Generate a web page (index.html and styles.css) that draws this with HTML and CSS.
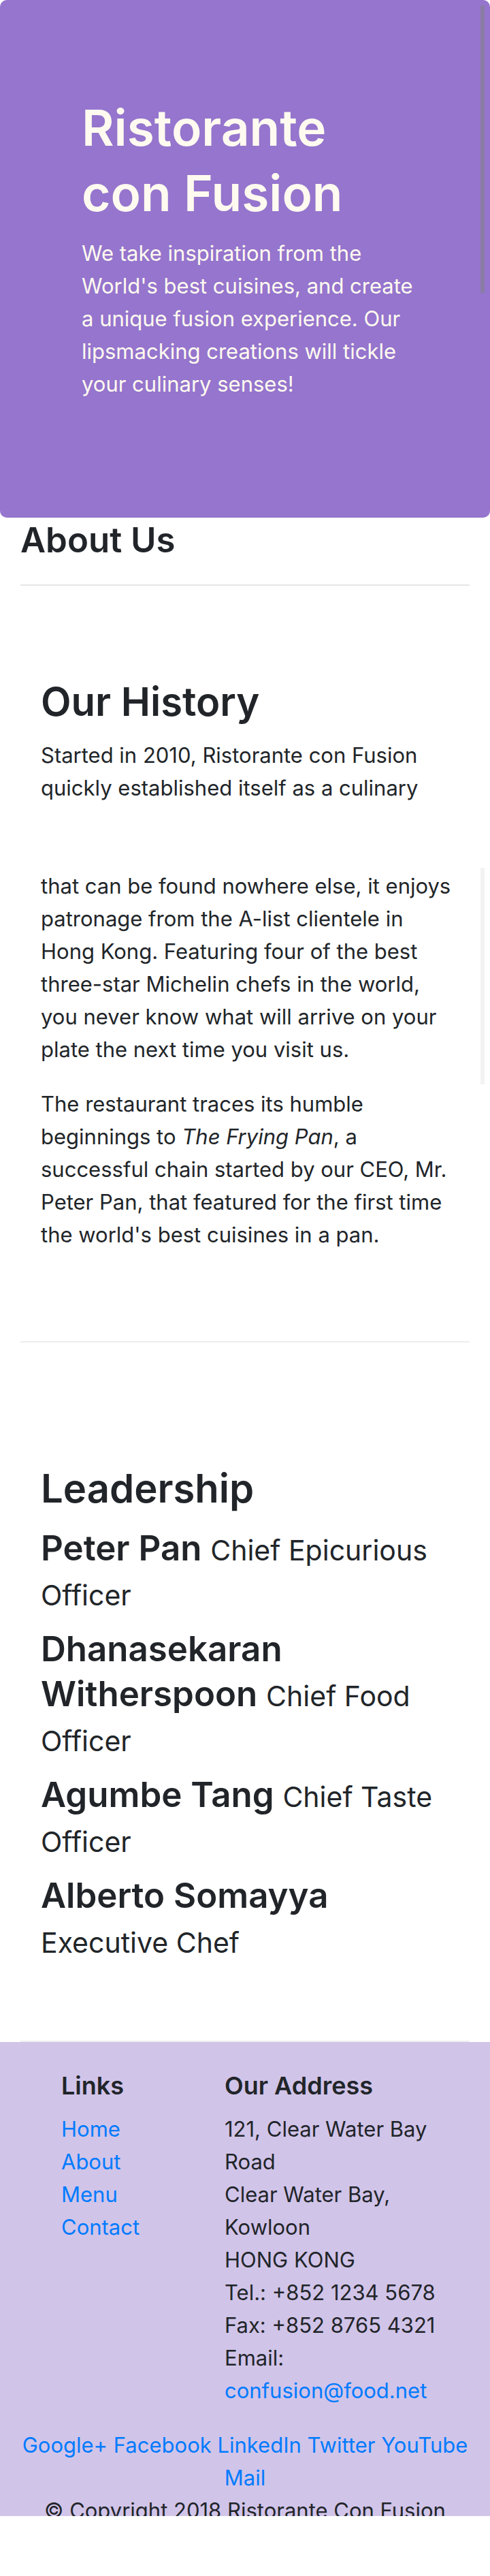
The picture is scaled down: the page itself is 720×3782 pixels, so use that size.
FILE: index.html
```html
<!DOCTYPE html>
<html lang="en">
<head>
<meta charset="utf-8">
<meta name="viewport" content="width=device-width, initial-scale=1">
<title>Ristorante Con Fusion: About Us</title>
<link rel="stylesheet" href="styles.css">
</head>
<body>
<header class="jumbotron">
  <h1>Ristorante con Fusion</h1>
  <p>We take inspiration from the World's best cuisines, and create a unique fusion experience. Our lipsmacking creations will tickle your culinary senses!</p>
  <div class="scroll-thumb" aria-hidden="true"></div>
</header>

<main class="container">
  <h3 class="page-title">About Us</h3>
  <hr class="rule">

  <section class="row-content history">
    <h2>Our History</h2>
    <p class="intro">Started in 2010, Ristorante con Fusion quickly established itself as a culinary</p>
    <p>that can be found nowhere else, it enjoys patronage from the A-list clientele in Hong Kong. Featuring four of the best three-star Michelin chefs in the world, you never know what will arrive on your plate the next time you visit us.</p>
    <p>The restaurant traces its humble beginnings to <em>The Frying Pan</em>, a successful chain started by our CEO, Mr. Peter Pan, that featured for the first time the world's best cuisines in a pan.</p>
    <div class="scroll-track" aria-hidden="true"></div>
  </section>

  <section class="row-content leadership">
    <h2>Leadership</h2>
    <h3>Peter Pan <small>Chief Epicurious Officer</small></h3>
    <h3>Dhanasekaran Witherspoon <small>Chief Food Officer</small></h3>
    <h3>Agumbe Tang <small>Chief Taste Officer</small></h3>
    <h3>Alberto Somayya <small>Executive Chef</small></h3>
  </section>
</main>

<footer class="footer">
  <div class="footer-columns">
    <nav class="footer-links">
      <h5>Links</h5>
      <ul>
        <li><a href="#">Home</a></li>
        <li><a href="#">About</a></li>
        <li><a href="#">Menu</a></li>
        <li><a href="#">Contact</a></li>
      </ul>
    </nav>
    <div class="footer-address">
      <h5>Our Address</h5>
      <address>
        121, Clear Water Bay Road<br>
        Clear Water Bay, Kowloon<br>
        HONG KONG<br>
        Tel.: +852 1234 5678<br>
        Fax: +852 8765 4321<br>
        Email: <a href="mailto:confusion@food.net">confusion@food.net</a>
      </address>
    </div>
  </div>
  <div class="social">
    <a href="#">Google+</a>
    <a href="#">Facebook</a>
    <a href="#">LinkedIn</a>
    <a href="#">Twitter</a>
    <a href="#">YouTube</a>
    <a href="#">Mail</a>
  </div>
  <p class="copyright">© Copyright 2018 Ristorante Con Fusion</p>
</footer>
</body>
</html>
```
FILE: styles.css
```css
* {
  box-sizing: border-box;
}

body {
  margin: 0;
  background: #fff;
  color: #212529;
  font-family: Inter, "Liberation Sans", sans-serif;
  font-size: 31px;
  line-height: 48px;
}

h1,
h2,
h3,
h5 {
  margin: 0 0 16px;
  font-weight: 600;
}

h1 {
  font-size: 73px;
  line-height: 96px;
}

h2 {
  font-size: 58px;
  line-height: 77px;
}

h3 {
  font-size: 51px;
  line-height: 66px;
}

h5 {
  font-size: 36px;
  line-height: 48px;
}

p {
  margin: 0 0 32px;
}

small {
  font-size: 41px;
  font-weight: 400;
  line-height: 1;
}

a {
  color: #007bff;
  text-decoration: none;
}

a:hover {
  text-decoration: underline;
}

.jumbotron {
  position: relative;
  padding: 140px 100px 140px 120px;
  border-radius: 10px;
  background: #9575cd;
  color: #fffaf0;
}

.scroll-thumb,
.scroll-track {
  position: absolute;
  width: 6px;
}

.scroll-thumb {
  top: 8px;
  right: 8px;
  height: 422px;
  background: #8a7da5;
}

.scroll-track {
  top: 382px;
  right: -22px;
  height: 318px;
  background: #f3f3f3;
}

.container {
  padding: 0 30px;
}

.page-title {
  margin: 0;
}

.rule {
  height: 2px;
  margin: 32px 0;
  border: 0;
  background: #e5e5e5;
}

.row-content {
  position: relative;
  padding: 100px 20px 100px 30px;
  border-bottom: 2px solid #eee;
}

.intro {
  margin-bottom: 96px;
}

.leadership {
  padding-top: 176px;
  padding-bottom: 98px;
}

.footer {
  padding-top: 40px;
  background: #d1c4e9;
}

.footer-columns {
  display: grid;
  grid-template-columns: 4fr 7fr;
  padding-left: calc(100% / 12);
}

.footer-links,
.footer-address {
  padding: 0 30px;
}

.footer-links ul {
  margin: 0;
  padding: 0;
  list-style: none;
}

.footer-address address {
  margin-bottom: 32px;
  font-style: normal;
}

.social {
  padding: 0 30px;
  text-align: center;
}

.copyright {
  height: 32px;
  margin: 0;
  overflow: hidden;
  text-align: center;
}
```
